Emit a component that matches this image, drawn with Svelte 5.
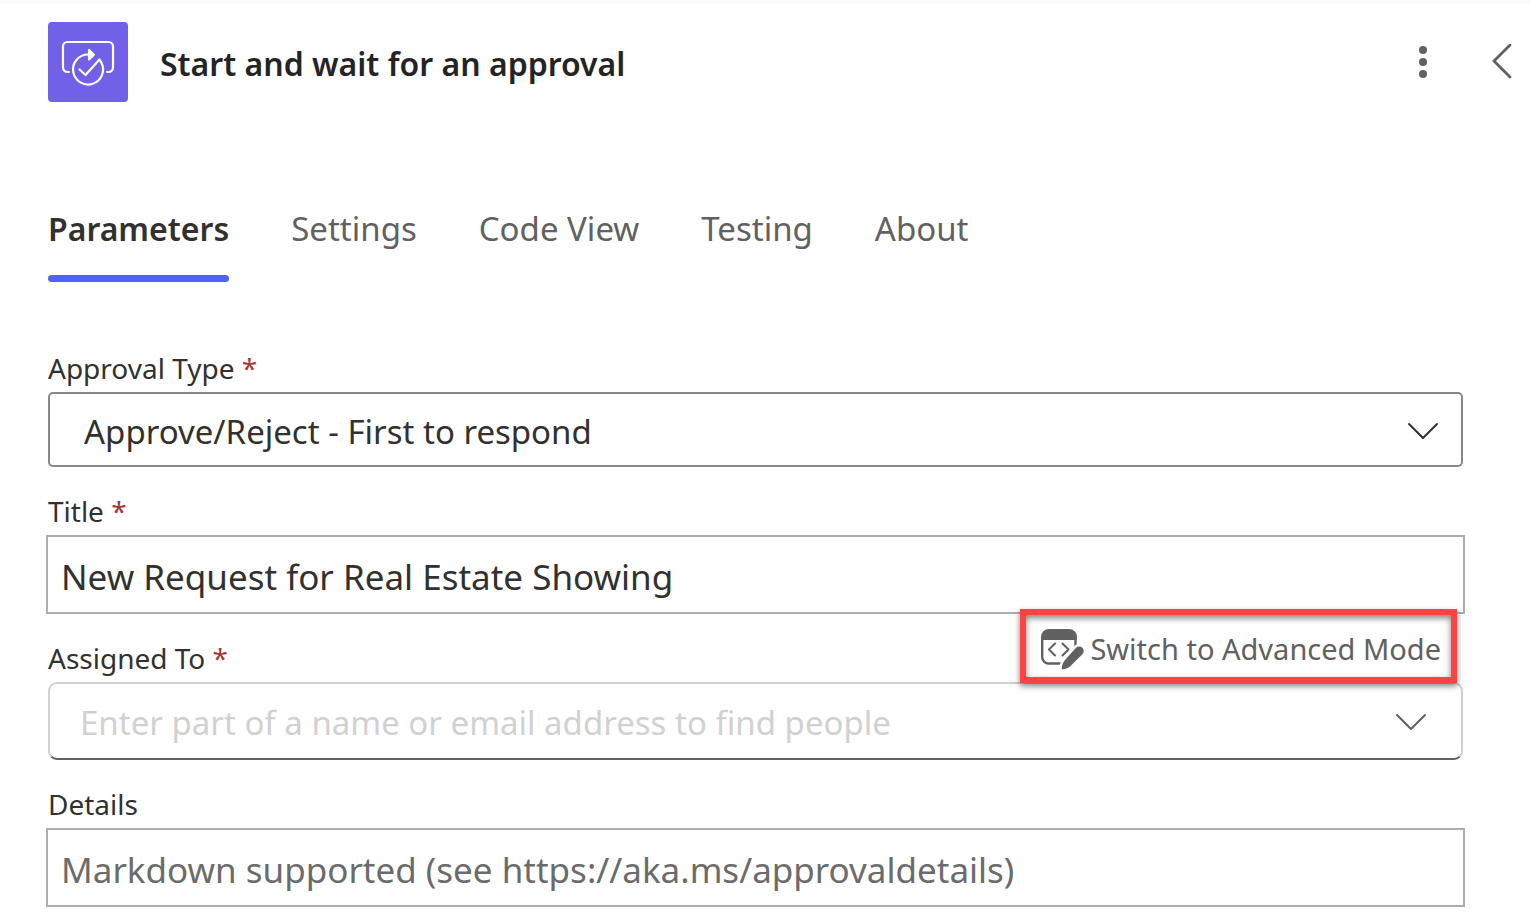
<script>
  const tabs = ['Parameters', 'Settings', 'Code View', 'Testing', 'About'];
  const approvalTypes = [
    'Approve/Reject - First to respond',
    'Approve/Reject - Everyone must approve',
    'Custom Responses - Wait for one response',
    'Custom Responses - Wait for all responses'
  ];

  let activeTab = $state('Parameters');
  let approvalType = $state(approvalTypes[0]);
  let title = $state('New Request for Real Estate Showing');
  let assignedTo = $state('');
  let details = $state('');
</script>

<main class="panel">
  <header class="header">
    <svg class="logo" viewBox="0 0 80 80" fill="none" stroke="#fff" stroke-width="2.2" stroke-linecap="round" stroke-linejoin="round" aria-hidden="true">
      <rect width="80" height="80" rx="4" fill="#7160e8" stroke="none" />
      <path d="M21 50h-1.500a4.500 4.500 0 0 1-4.500-4.500v-21a4.500 4.500 0 0 1 4.500-4.500h41a4.500 4.500 0 0 1 4.500 4.500v21a4.500 4.500 0 0 1-4.500 4.500h-1.500" />
      <path d="M42 32.500h-2a15 15 0 1 0 13.300 8L51.500 37.500 37.500 53l-6-5.500" />
      <path d="M41 28v9.500l5-4.800z" fill="#fff" />
    </svg>
    <h1 class="heading">Start and wait for an approval</h1>
    <button class="icon-button" aria-label="More commands">
      <svg width="10" height="34" viewBox="0 0 10 34" fill="#616161">
        <circle cx="5" cy="5" r="4" />
        <circle cx="5" cy="17" r="4" />
        <circle cx="5" cy="29" r="4" />
      </svg>
    </button>
    <button class="icon-button" aria-label="Collapse">
      <svg width="20" height="36" viewBox="0 1 20 36" fill="none" stroke="#616161" stroke-width="2.800" stroke-linecap="round" stroke-linejoin="round"><path d="M18 2L2 18l16 16" /></svg>
    </button>
  </header>

  <div class="tabs" role="tablist">
    {#each tabs as tab}
      <button class="tab" class:active={tab === activeTab} role="tab" aria-selected={tab === activeTab} onclick={() => (activeTab = tab)}>
        {tab}
      </button>
    {/each}
  </div>

  <form class="fields">
    <div class="field">
      <label for="approval-type">Approval Type <span class="required">*</span></label>
      <div class="control">
        <select id="approval-type" class="dropdown" bind:value={approvalType}>
          {#each approvalTypes as type}
            <option>{type}</option>
          {/each}
        </select>
        <svg class="chevron dark" width="32" height="20" viewBox="0 -2 32 20" fill="none" stroke="currentColor" stroke-width="2" stroke-linecap="round" stroke-linejoin="round" aria-hidden="true"><path d="M2 2l14 14L30 2" /></svg>
      </div>
    </div>

    <div class="field">
      <label for="title">Title <span class="required">*</span></label>
      <input id="title" class="text-box" type="text" bind:value={title} />
    </div>

    <div class="field">
      <label for="assigned-to">Assigned To <span class="required">*</span></label>
      <div class="control">
        <input id="assigned-to" class="people" type="text" placeholder="Enter part of a name or email address to find people" bind:value={assignedTo} />
        <svg class="chevron light" width="32" height="20" viewBox="0 -2 32 20" fill="none" stroke="currentColor" stroke-width="2" stroke-linecap="round" stroke-linejoin="round" aria-hidden="true"><path d="M2 2l14 14L30 2" /></svg>
      </div>
      <button type="button" class="mode-switch">
        <svg width="44" height="46" viewBox="-1 -4 44 46" fill="none" stroke="#616161" stroke-width="2" stroke-linecap="round" stroke-linejoin="round" aria-hidden="true">
          <path d="M1 10V8a7 7 0 0 1 7-7h20a7 7 0 0 1 7 7v2z" fill="#616161" />
          <path d="M1.200 9v19a6.500 6.500 0 0 0 6.500 6.500H20M34.500 9v10" stroke-width="2.400" stroke-linecap="butt" />
          <path d="M14 14.500L8 20.500l6 6M21.500 14.500l6 6-6 6" />
          <path d="M35 18.800a4.500 4.500 0 0 1 6.400 6.400L29.500 37c-2 2-4.500 2.700-7 3.300-1.600.4-2.200-.3-1.800-1.900.6-2.500 1.300-5.300 3.300-7.300z" fill="#616161" stroke="#fff" stroke-width="5" paint-order="stroke" />
        </svg>
        Switch to Advanced Mode
      </button>
    </div>

    <div class="field">
      <label for="details">Details</label>
      <input id="details" class="text-box" type="text" placeholder="Markdown supported (see https://aka.ms/approvaldetails)" bind:value={details} />
    </div>
  </form>
</main>

<style>
  :global(body) {
    margin: 0;
    background: #fff;
  }

  .panel {
    font-family: 'Segoe UI', 'Noto Sans', 'Open Sans', sans-serif;
    color: #323130;
    background: linear-gradient(#f9f9f9, #fff 6px);
    padding-bottom: 8px;
  }

  button,
  input,
  select {
    font-family: inherit;
    box-sizing: border-box;
    margin: 0;
  }

  button {
    border: none;
    background: none;
    padding: 0;
    cursor: pointer;
  }

  .header {
    display: flex;
    align-items: center;
    padding: 22px 18px 0 48px;
  }

  .logo {
    width: 80px;
    height: 80px;
    flex: none;
  }

  .heading {
    flex: 1;
    margin: 0 0 0 32px;
    padding-top: 4px;
    font-size: 32px;
    line-height: 48px;
    font-weight: 600;
    color: #242424;
  }

  .icon-button {
    display: flex;
    margin-left: 64px;
  }

  .tabs {
    display: flex;
    gap: 62px;
    padding: 102px 48px 0;
  }

  .tab {
    font-size: 33px;
    line-height: 50px;
    color: #616161;
    padding-bottom: 21px;
    position: relative;
  }

  .tab.active {
    font-size: 32px;
    font-weight: 600;
    color: #323130;
  }

  .tab.active::after {
    content: '';
    position: absolute;
    left: 0;
    right: 0;
    bottom: -7px;
    height: 7px;
    border-radius: 4px;
    background: #4f62fa;
  }

  .fields {
    display: flex;
    flex-direction: column;
    gap: 24px;
    padding: 73px 67px 0 48px;
  }

  .field {
    position: relative;
    display: flex;
    flex-direction: column;
  }

  label {
    font-size: 28px;
    line-height: 40px;
    padding-bottom: 4px;
  }

  .required {
    color: #a4373a;
  }

  .control {
    position: relative;
    display: flex;
  }

  .dropdown {
    appearance: none;
    width: 100%;
    height: 75px;
    padding: 4px 80px 0 34px;
    border: 2px solid #8a8886;
    border-radius: 5px;
    background: #fff;
    color: #323130;
    font-size: 33px;
  }

  .people {
    width: 100%;
    height: 78px;
    padding: 2px 80px 0 30px;
    border: 2px solid #d1d1d1;
    border-bottom-color: #616161;
    border-radius: 9px;
    background: #fff;
    font-size: 33px;
  }

  .people::placeholder {
    color: #d1d1d1;
    opacity: 1;
  }

  .chevron {
    position: absolute;
    top: 50%;
    transform: translateY(-50%);
    pointer-events: none;
  }

  .chevron.dark {
    right: 24px;
    color: #323130;
  }

  .chevron.light {
    right: 36px;
    color: #616161;
  }

  .text-box {
    height: 79px;
    margin: 0 -2px;
    padding: 4px 13px 0;
    border: 2px solid #adadad;
    border-radius: 0;
    background: #fff;
    color: #323130;
    font-size: 35px;
  }

  .text-box::placeholder {
    color: #6b6b6b;
    opacity: 1;
  }

  .mode-switch {
    position: absolute;
    top: -29px;
    right: 6px;
    display: flex;
    align-items: center;
    gap: 6px;
    height: 74px;
    padding: 4px 10px 0 14px;
    border: 6px solid #ff4343;
    background: #fff;
    box-shadow: 0 3px 6px rgba(0, 0, 0, 0.5), inset 0 3px 6px rgba(0, 0, 0, 0.5);
    color: #616161;
    font-size: 29px;
    white-space: nowrap;
  }
</style>
